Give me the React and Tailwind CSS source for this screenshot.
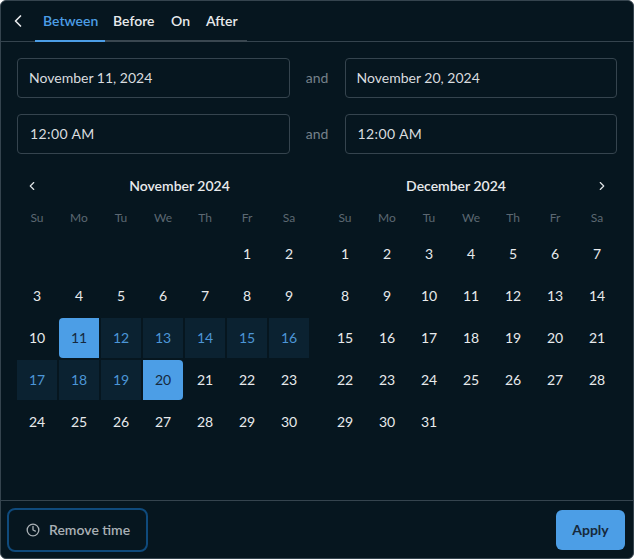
import { ChevronLeft, ChevronRight, Clock } from 'lucide-react';

const weekdays = ['Su', 'Mo', 'Tu', 'We', 'Th', 'Fr', 'Sa'];

function DayCell({ day, from, to }) {
    if (!day) return <div className="h-10 w-10" />;
    const isEdge = day === from || day === to;
    const inRange = from && day > from && day < to;
    let cls = 'text-[#e8eaec]';
    if (isEdge) cls = 'bg-[#4c9ee6] text-[#16293c]';
    if (day === from) cls += ' rounded-l-[4px]';
    if (day === to) cls += ' rounded-r-[4px]';
    if (inRange) cls = 'bg-[#0b2231] text-[#4c96d7]';
    return (
        <div className={`flex h-10 w-10 items-center justify-center text-sm ${cls}`}>{day}</div>
    );
}

function Month({ title, offset, days, from, to, side }) {
    const cells = [...Array(offset).fill(null), ...Array.from({ length: days }, (_, i) => i + 1)];
    return (
        <div className="w-[292px]">
            <div className="flex h-5 items-center">
                {side === 'left' && (
                    <div className="flex w-[33px] justify-center pr-[3px]">
                        <ChevronLeft size={14} className="text-[#dfe3e6]" />
                    </div>
                )}
                <div className="flex-1 text-center text-sm font-semibold text-[#e8eaec]">{title}</div>
                {side === 'right' && (
                    <div className="flex w-[30px] justify-center">
                        <ChevronRight size={14} className="text-[#dfe3e6]" />
                    </div>
                )}
            </div>
            <div className="mt-[12px] grid grid-cols-[repeat(7,40px)] gap-x-[2px]">
                {weekdays.map(d => (
                    <div key={d} className="flex h-5 items-center justify-center text-xs text-[#5c6872]">{d}</div>
                ))}
            </div>
            <div className="mt-[6px] grid grid-cols-[repeat(7,40px)] gap-[2px]">
                {cells.map((day, i) => (
                    <DayCell key={i} day={day} from={from} to={to} />
                ))}
            </div>
        </div>
    );
}

function Field({ value, time }) {
    return (
        <div className={`flex h-10 flex-1 items-center rounded-[4px] border border-[#35444e] text-sm text-[#d9dcdf] ${time ? 'pl-3 tracking-[0.4px]' : 'pl-[11px]'}`}>
            {value}
        </div>
    );
}

export default function App() {
    return (
        <div className="flex h-[559px] w-[634px] flex-col rounded-[6px] border border-[#35444e] bg-[#06161f] font-['Lato','Liberation_Sans',sans-serif]">
            <div className="flex h-[41px] shrink-0 border-b border-[#35444e]">
                <div className="flex w-[34px] items-center justify-center">
                    <ChevronLeft size={20} className="text-[#e8eaec]" />
                </div>
                <div className="flex h-[41px] border-b-2 border-[#3a4750] text-sm font-semibold text-[#e8eaec]">
                    <div className="-mb-[2px] flex h-[41px] w-[70px] items-center border-b-2 border-[#4c9ee6] pl-2 text-[#4c9ee6]">Between</div>
                    <div className="flex w-[58px] items-center pl-2">Before</div>
                    <div className="flex w-[35px] items-center pl-2">On</div>
                    <div className="flex w-[49px] items-center pl-2">After</div>
                </div>
            </div>

            <div className="flex-1 px-4 pt-4">
                <div className="flex items-center">
                    <Field value="November 11, 2024" />
                    <div className="w-[55px] text-center text-sm text-[#75818a]">and</div>
                    <Field value="November 20, 2024" />
                </div>
                <div className="mt-4 flex items-center">
                    <Field value="12:00 AM" time />
                    <div className="w-[55px] text-center text-sm text-[#75818a]">and</div>
                    <Field value="12:00 AM" time />
                </div>
                <div className="mt-[22px] flex gap-4">
                    <Month title="November 2024" offset={5} days={30} from={11} to={20} side="left" />
                    <Month title="December 2024" offset={0} days={31} side="right" />
                </div>
            </div>

            <div className="flex h-[58px] shrink-0 items-center justify-between border-t border-[#35444e] pl-[6px] pr-2">
                <div className="flex h-11 w-[141px] items-center gap-[9px] rounded-[8px] border-2 border-[#0f4a7c] pl-[17px] text-sm font-semibold text-[#a9b0b5]">
                    <Clock size={14} strokeWidth={2.25} />
                    <span>Remove time</span>
                </div>
                <div className="flex h-10 w-[69px] items-center justify-center rounded-[6px] bg-[#4c9ee6] text-sm font-bold text-[#16293c]">
                    Apply
                </div>
            </div>
        </div>
    );
}
